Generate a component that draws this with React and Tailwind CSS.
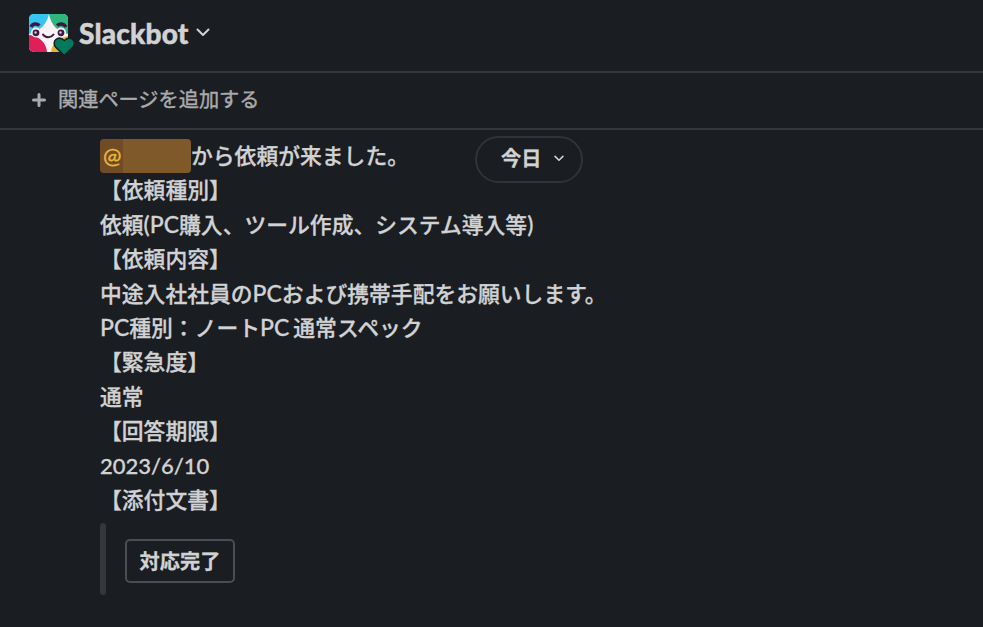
import React from "react";

const jp = "font-['Lato','Noto_Sans_CJK_JP',sans-serif]";

// Latin runs are set a little larger than the kana around them
const Latin = ({ children }) => <span className="text-[23px] leading-none">{children}</span>;

const lines = [
  "【依頼種別】",
  <>依頼<Latin>(PC</Latin>購入、ツール作成、システム導入等<Latin>)</Latin></>,
  "【依頼内容】",
  <>中途入社社員の<Latin>PC</Latin>および携帯手配をお願いします。</>,
  <><Latin>PC</Latin>種別：ノート<Latin>PC</Latin><span className="ml-[4px]">通常スペック</span></>,
  "【緊急度】",
  "通常",
  "【回答期限】",
  <span className="text-[22px]">2023/6/10</span>,
  "【添付文書】",
];

function Chevron({ className, strokeWidth }) {
  return (
    <svg viewBox="0 0 14 9" fill="none" className={className}>
      <path d="M1.5 1.5 7 7l5.500-5.500" stroke="currentColor" strokeWidth={strokeWidth} strokeLinecap="round" strokeLinejoin="round" />
    </svg>
  );
}

function Avatar() {
  return (
    <svg viewBox="0 0 46 43" className="w-[46px] h-[43px] shrink-0">
      <defs>
        <clipPath id="face">
          <rect width="39" height="38" rx="5" />
        </clipPath>
      </defs>
      <g clipPath="url(#face)">
        <rect width="39" height="38" fill="#f7f3f6" />
        <path d="M0 0H20C18 9 12 17 0 20Z" fill="#36c5f0" />
        <path d="M20 0H39V20C29 18 22 11 20 0Z" fill="#2eb67d" />
        <path d="M0 21C10 22 17 28 18 38H0Z" fill="#e01e5a" />
        <path d="M39 22C29 24 23 29 22 38H39Z" fill="#ecb22e" />
        {/* Cheeks */}
        <circle cx="7" cy="18.500" r="5" fill="#f7f3f6" />
        <circle cx="32" cy="18.500" r="5" fill="#f7f3f6" />
        <path d="M2 13C3.500 9.500 7.500 9 10.500 11.500M28 11.500C31 9 35 9.500 37 13" stroke="#3f1642" strokeWidth="3.400" fill="none" />
        <circle cx="7" cy="18.800" r="3.400" fill="#431745" />
        <circle cx="32" cy="18.800" r="3.400" fill="#431745" />
        <circle cx="6.500" cy="18.500" r="1.200" fill="#d9c6dd" />
        <circle cx="31.500" cy="18.500" r="1.200" fill="#d9c6dd" />
        <path d="M14 20.500C16 24 22 24 24.500 20.500" stroke="#431745" strokeWidth="2" fill="none" strokeLinecap="round" />
      </g>
      <path
        d="M35.300 40.500 27.500 33C23 28 29 21.500 35.300 27.500C41.500 21.500 47.500 28 43 33Z"
        fill="#007a5a"
        stroke="#1a1d21"
        strokeWidth="3"
        paintOrder="stroke"
      />
    </svg>
  );
}

export default function App() {
  return (
    <div className={`w-full h-[627px] overflow-hidden bg-[#1a1d21] text-[#d1d2d3] ${jp}`}>
      {/* Channel header */}
      <header className="h-[73px] flex items-start border-b-2 border-[#35373b] pl-[29px] pt-[14px]">
        <Avatar />
        <h1 className="ml-[4px] w-[111px] text-[28px] leading-[39px] font-black tracking-[0.2px] [-webkit-text-stroke:0.5px]">Slackbot</h1>
        <Chevron className="w-[14px] h-[9px] ml-[6px] mt-[14px]" strokeWidth={2} />
      </header>

      {/* Bookmark bar */}
      <div className="h-[57px] flex items-center border-b-2 border-[#35373b] pl-[32px] pb-[3px] text-[#ababad]">
        <svg viewBox="0 0 14 14" className="w-[14px] h-[14px] mt-[2px]">
          <path d="M7 1.500v11M1.500 7h11" stroke="currentColor" strokeWidth="3" strokeLinecap="round" />
        </svg>
        <span className="ml-[12px] text-[20.200px] leading-[30px] [-webkit-text-stroke:0.4px]">関連ページを追加する</span>
      </div>

      {/* Message */}
      <main className="relative pl-[100px] pt-[9px]">
        <div className="text-[21.800px] whitespace-nowrap font-medium [-webkit-text-stroke:0.3px]">
          <div className="h-[34.400px] leading-[34.400px] flex">
            <span className="w-[91px] h-[34px] rounded-[4px] bg-[#7d562a] bg-linear-to-r from-[#704b25] from-25% to-[#80592a] to-25% pl-[3px] text-[#e8b63a] text-[22px]">@</span>
            <span>から依頼が来ました。</span>
          </div>
          {lines.map((line, i) => (
            <div key={i} className="h-[34.400px] leading-[34.400px]">{line}</div>
          ))}
        </div>

        <div className="mt-[6px] flex h-[72px]">
          <div className="w-[6px] rounded-full bg-[#35373b]" />
          <button className="ml-[19px] mt-[16px] w-[110px] h-[44px] rounded-[5px] border-2 border-[#4b4d51] text-[20.200px] leading-[40px] font-bold [-webkit-text-stroke:0.3px]">
            対応完了
          </button>
        </div>

        {/* Date pill floats over the messages */}
        <button className="absolute left-[475px] top-[6px] w-[108px] h-[47px] rounded-full border-2 border-[#303337] flex items-center pl-[24px] pb-[2px] text-[20.200px] font-bold [-webkit-text-stroke:0.3px]">
          今日
          <Chevron className="w-[10px] h-[7px] ml-[13px]" strokeWidth={2.2} />
        </button>
      </main>
    </div>
  );
}
